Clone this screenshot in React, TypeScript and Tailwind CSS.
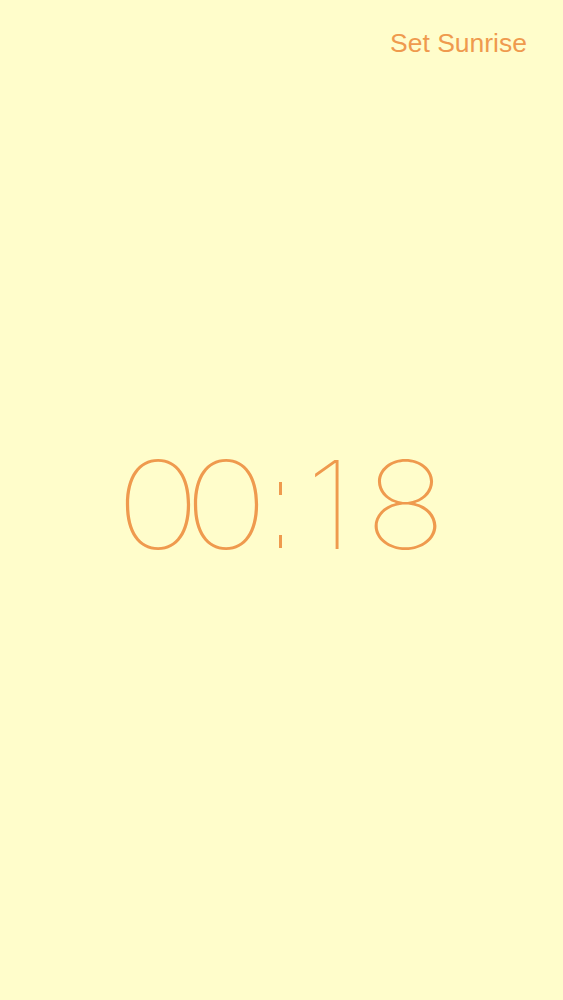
// Sunrise clock screen: a "Set Sunrise" link top-right, the time large in the middle.

function Digit({ ch, stretch, nudge = "" }: { ch: string; stretch: string; nudge?: string }) {
  return (
    <span className={`w-[68px] flex justify-center ${nudge}`}>
      <span className={`inline-block ${stretch}`}>{ch}</span>
    </span>
  );
}

function Colon() {
  return (
    <span className="w-[43px] flex flex-col items-center pt-[38px] gap-[40px] pr-[3px]">
      <span className="sr-only">:</span>
      <span aria-hidden="true" className="block w-[2.5px] h-[13px] bg-[#ef9a4e]" />
      <span aria-hidden="true" className="block w-[2.5px] h-[13px] bg-[#ef9a4e]" />
    </span>
  );
}

export default function App() {
  return (
    <div className="min-h-[1000px] w-full bg-[#fffdcb] flex flex-col text-[#ef9a4e]">
      <div className="flex justify-end pr-9 pt-[30px]">
        <button className="text-[26.5px] leading-none font-['Liberation_Sans',sans-serif]">
          Set Sunrise
        </button>
      </div>
      <div className="flex justify-center pt-[387px] pl-[1px]">
        <div className="flex items-start text-[122px] leading-none font-thin font-['Inter',sans-serif]">
          <Digit ch="0" stretch="scale-x-[1.18]" />
          <Digit ch="0" stretch="scale-x-[1.18]" />
          <Colon />
          <Digit ch="1" stretch="scale-x-[1.05]" nudge="pr-[16px]" />
          <Digit ch="8" stretch="scale-x-[1.12]" />
        </div>
      </div>
    </div>
  );
}
